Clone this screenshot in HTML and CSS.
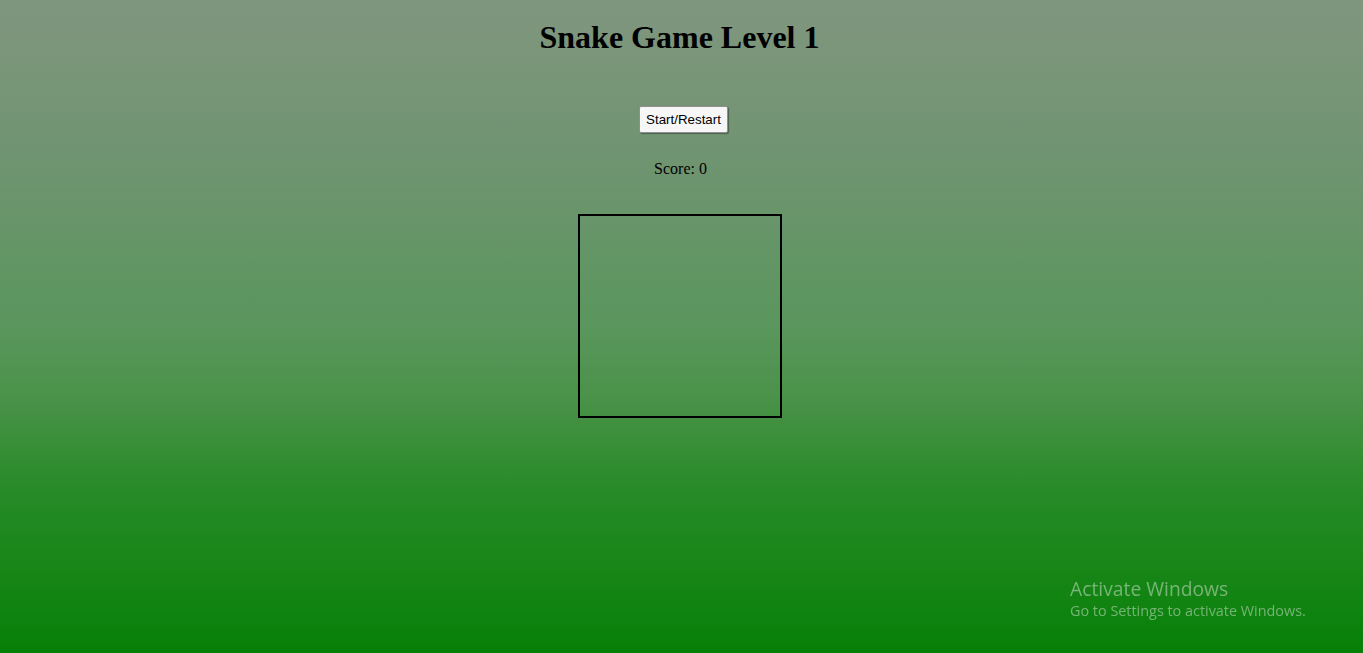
FILE: index.html
```html
<!DOCTYPE html>
<html>
<head>
<meta charset="utf-8">
<title>Snake Game Level 1</title>
<link rel="stylesheet" href="styles.css">
</head>
<body>
<main class="game">
  <h1 class="title">Snake Game Level 1</h1>
  <button class="start-btn" type="button">Start/Restart</button>
  <p class="score">Score: 0</p>
  <canvas class="board" width="200" height="200"></canvas>
</main>
<div class="watermark">
  <div class="wm-title">Activate Windows</div>
  <div class="wm-sub">Go to Settings to activate Windows.</div>
</div>
</body>
</html>
```
FILE: styles.css
```css
html, body {
  height: 100%;
}
body {
  margin: 0;
  font-family: "Liberation Serif", "Times New Roman", serif;
  color: #000;
  background: linear-gradient(to bottom,
    #80967f 0%,
    #6f9470 25%,
    #5a965d 50%,
    #4a9249 61%,
    #278b27 75%,
    #078007 100%);
  overflow: hidden;
}
.game {
  display: flex;
  flex-direction: column;
  align-items: center;
}
.title {
  font-size: 32px;
  line-height: 37px;
  font-weight: bold;
  margin: 19px 0 0 -4px;
}
.start-btn {
  margin: 50px 0 0 4px;
  font-family: "Liberation Sans", Arial, sans-serif;
  font-size: 13.33px;
  line-height: 15px;
  padding: 5px 6px;
  height: 27px;
  background: #f7f7f7;
  border: 1px solid #8f8f8f;
  border-radius: 2px;
  box-shadow: 1px 1px 1px rgba(0,0,0,0.35);
  color: #000;
}
.score {
  margin: 27px 0 0 -2px;
  font-size: 16px;
  line-height: 18px;
}
.board {
  margin: 36px 0 0 -4px;
  width: 200px;
  height: 200px;
  border: 2px solid #000;
  display: block;
}
.watermark {
  position: fixed;
  left: 1070px;
  top: 576px;
  font-family: "Open Sans", "Noto Sans", sans-serif;
  color: rgba(200, 220, 200, 0.55);
}
.wm-title {
  font-size: 19.3px;
  line-height: 25px;
}
.wm-sub {
  font-size: 14.4px;
  line-height: 20px;
}
```
